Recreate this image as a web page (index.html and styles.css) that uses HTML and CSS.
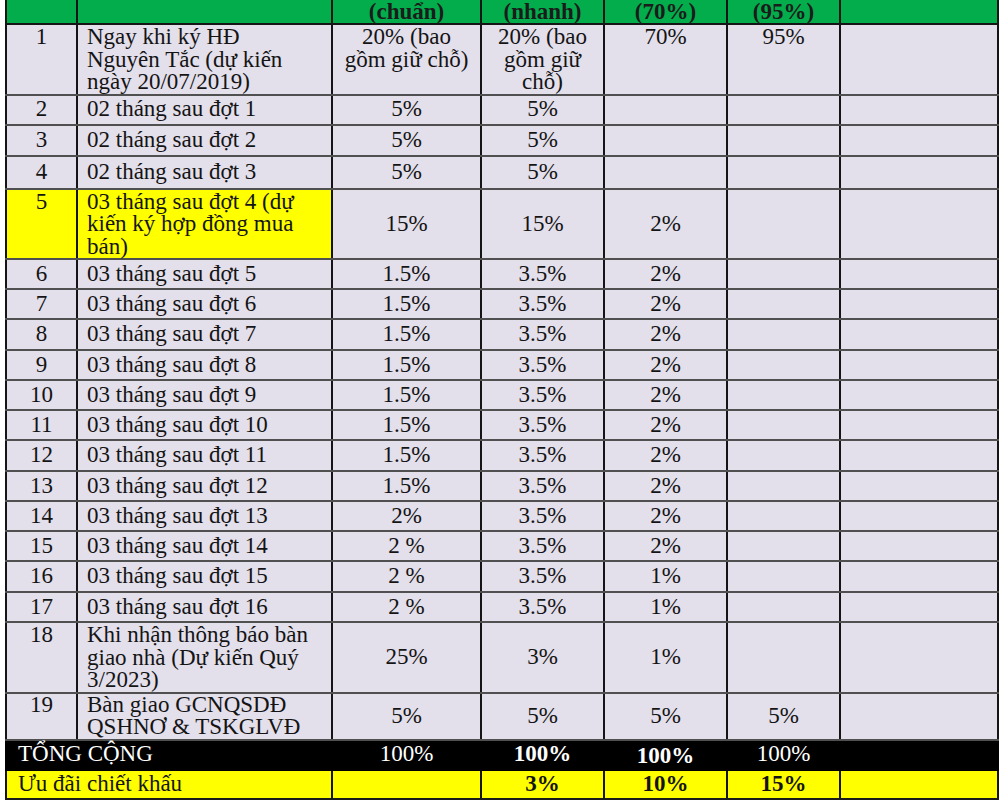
FILE: index.html
```html
<!DOCTYPE html>
<html lang="vi">
<head>
<meta charset="utf-8">
<title>Tiến độ thanh toán</title>
<link rel="stylesheet" href="styles.css">
</head>
<body>
<table class="sched">
  <colgroup>
    <col class="c-no"><col class="c-desc"><col class="c-a"><col class="c-b"><col class="c-c"><col class="c-d"><col class="c-e">
  </colgroup>
  <thead>
    <tr class="head">
      <th></th><th></th><th>(chuẩn)</th><th>(nhanh)</th><th>(70%)</th><th>(95%)</th><th></th>
    </tr>
  </thead>
  <tbody>
    <tr class="multi top">
      <td class="no">1</td>
      <td class="desc">Ngay khi ký HĐ<br>Nguyên Tắc (dự kiến<br>ngày 20/07/2019)</td>
      <td class="pct">20% (bao<br>gồm giữ chỗ)</td>
      <td class="pct">20% (bao<br>gồm giữ<br>chỗ)</td>
      <td class="pct">70%</td>
      <td class="pct">95%</td>
      <td></td>
    </tr>
    <tr class="r30"><td class="no">2</td><td class="desc">02 tháng sau đợt 1</td><td class="pct">5%</td><td class="pct">5%</td><td></td><td></td><td></td></tr>
    <tr class="r31"><td class="no">3</td><td class="desc">02 tháng sau đợt 2</td><td class="pct">5%</td><td class="pct">5%</td><td></td><td></td><td></td></tr>
    <tr class="r33"><td class="no">4</td><td class="desc">02 tháng sau đợt 3</td><td class="pct">5%</td><td class="pct">5%</td><td></td><td></td><td></td></tr>
    <tr class="multi">
      <td class="no hl">5</td>
      <td class="desc hl">03 tháng sau đợt 4 (dự<br>kiến ký hợp đồng mua<br>bán)</td>
      <td class="pct">15%</td><td class="pct">15%</td><td class="pct">2%</td><td></td><td></td>
    </tr>
    <tr class="r30"><td class="no">6</td><td class="desc">03 tháng sau đợt 5</td><td class="pct">1.5%</td><td class="pct">3.5%</td><td class="pct">2%</td><td></td><td></td></tr>
    <tr class="r30"><td class="no">7</td><td class="desc">03 tháng sau đợt 6</td><td class="pct">1.5%</td><td class="pct">3.5%</td><td class="pct">2%</td><td></td><td></td></tr>
    <tr class="r31"><td class="no">8</td><td class="desc">03 tháng sau đợt 7</td><td class="pct">1.5%</td><td class="pct">3.5%</td><td class="pct">2%</td><td></td><td></td></tr>
    <tr class="r30"><td class="no">9</td><td class="desc">03 tháng sau đợt 8</td><td class="pct">1.5%</td><td class="pct">3.5%</td><td class="pct">2%</td><td></td><td></td></tr>
    <tr class="r30"><td class="no">10</td><td class="desc">03 tháng sau đợt 9</td><td class="pct">1.5%</td><td class="pct">3.5%</td><td class="pct">2%</td><td></td><td></td></tr>
    <tr class="r30"><td class="no">11</td><td class="desc">03 tháng sau đợt 10</td><td class="pct">1.5%</td><td class="pct">3.5%</td><td class="pct">2%</td><td></td><td></td></tr>
    <tr class="r31"><td class="no">12</td><td class="desc">03 tháng sau đợt 11</td><td class="pct">1.5%</td><td class="pct">3.5%</td><td class="pct">2%</td><td></td><td></td></tr>
    <tr class="r30"><td class="no">13</td><td class="desc">03 tháng sau đợt 12</td><td class="pct">1.5%</td><td class="pct">3.5%</td><td class="pct">2%</td><td></td><td></td></tr>
    <tr class="r30"><td class="no">14</td><td class="desc">03 tháng sau đợt 13</td><td class="pct">2%</td><td class="pct">3.5%</td><td class="pct">2%</td><td></td><td></td></tr>
    <tr class="r30"><td class="no">15</td><td class="desc">03 tháng sau đợt 14</td><td class="pct">2 %</td><td class="pct">3.5%</td><td class="pct">2%</td><td></td><td></td></tr>
    <tr class="r31"><td class="no">16</td><td class="desc">03 tháng sau đợt 15</td><td class="pct">2 %</td><td class="pct">3.5%</td><td class="pct">1%</td><td></td><td></td></tr>
    <tr class="r30"><td class="no">17</td><td class="desc">03 tháng sau đợt 16</td><td class="pct">2 %</td><td class="pct">3.5%</td><td class="pct">1%</td><td></td><td></td></tr>
    <tr class="multi">
      <td class="no">18</td>
      <td class="desc">Khi nhận thông báo bàn<br>giao nhà (Dự kiến Quý<br>3/2023)</td>
      <td class="pct">25%</td><td class="pct">3%</td><td class="pct">1%</td><td></td><td></td>
    </tr>
    <tr class="r46">
      <td class="no">19</td>
      <td class="desc">Bàn giao GCNQSDĐ<br>QSHNƠ &amp; TSKGLVĐ</td>
      <td class="pct">5%</td><td class="pct">5%</td><td class="pct">5%</td><td class="pct">5%</td><td></td>
    </tr>
    <tr class="total">
      <td colspan="2" class="label">TỔNG CỘNG</td>
      <td class="pct">100%</td>
      <td class="pct strong">100%</td>
      <td class="pct strong low">100%</td>
      <td class="pct">100%</td>
      <td></td>
    </tr>
    <tr class="discount">
      <td colspan="2" class="label">Ưu đãi chiết khấu</td>
      <td></td>
      <td class="pct strong">3%</td>
      <td class="pct strong">10%</td>
      <td class="pct strong">15%</td>
      <td></td>
    </tr>
  </tbody>
</table>
</body>
</html>
```

FILE: styles.css
```css
html, body {
  margin: 0;
  padding: 0;
  background: #ffffff;
}

body {
  font-family: "Liberation Serif", "Times New Roman", serif;
  color: #141414;
}

.sched {
  border-collapse: collapse;
  table-layout: fixed;
  width: 992px;
  margin: 0 0 0 5px;
  font-size: 23px;
  line-height: 22.5px;
}

.c-no { width: 71px; }
.c-desc { width: 255px; }
.c-a { width: 149px; }
.c-b { width: 123px; }
.c-c { width: 123px; }
.c-d { width: 113px; }
.c-e { width: 158px; }

.sched th,
.sched td {
  padding: 0;
  border-left: 2px solid #151515;
  border-right: 2px solid #151515;
  border-top: 2px solid #505050;
  border-bottom: 2px solid #505050;
  background: #e3dfeb;
  vertical-align: middle;
}

.head th {
  background: #03ad4c;
  height: 23px;
  font-weight: bold;
  text-align: center;
  color: #1b1b1b;
  vertical-align: top;
  line-height: 23px;
  border-top: 0 none;
  border-bottom: 2px solid #151515;
}

.sched .no {
  text-align: center;
}

.sched .desc {
  text-align: left;
  padding-left: 9px;
  padding-right: 4px;
}

.sched .pct {
  text-align: center;
}

.multi .no,
.multi .desc {
  vertical-align: top;
  padding-top: 1px;
}

.top td {
  vertical-align: top;
  padding-top: 1px;
}

.r30 td { height: 28px; }
.r31 td { height: 29px; }
.r33 td { height: 31px; }

.r46 td { height: 44px; }
.r46 .no,
.r46 .desc {
  vertical-align: top;
}

.sched .hl {
  background: #ffff00;
}

.total td {
  background: #000000;
  color: #ffffff;
  height: 28px;
  border-left-color: #000000;
  border-right-color: #000000;
  border-bottom-color: #000000;
}

.total .label,
.discount .label {
  text-align: left;
  padding-left: 11px;
}

.sched .total .low {
  height: 24px;
  padding-top: 4px;
}

.discount td {
  background: #ffff00;
  height: 27px;
  border-bottom: 2px solid #1a1a1a;
  color: #141414;
}

.strong {
  font-weight: bold;
}
```
